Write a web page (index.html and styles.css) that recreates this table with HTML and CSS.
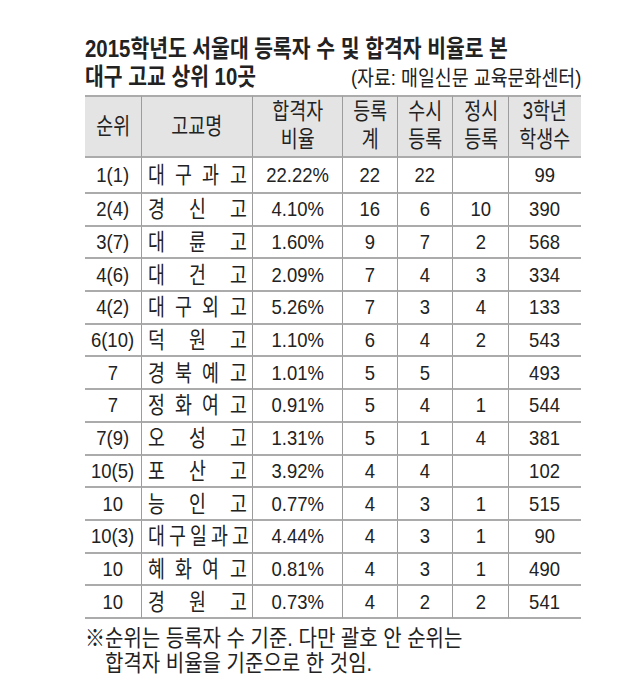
FILE: index.html
```html
<!DOCTYPE html>
<html lang="ko">
<head>
<meta charset="utf-8">
<title>2015학년도 서울대 등록자 수 및 합격자 비율로 본 대구 고교 상위 10곳</title>
<link rel="stylesheet" href="styles.css">
</head>
<body>
<div class="sheet">
  <div class="title-1"><span class="sx">2015학년도 서울대 등록자 수 및 합격자 비율로 본</span></div>
  <div class="title-2"><span class="sx">대구 고교 상위 10곳</span><span class="sx src">(자료: 매일신문 교육문화센터)</span></div>
  <table class="grid">
    <colgroup>
      <col class="c-rank"><col class="c-name"><col class="c-ratio"><col class="c-sum"><col class="c-early"><col class="c-reg"><col class="c-stu">
    </colgroup>
    <thead>
      <tr>
        <th><span class="v k">순위</span></th>
        <th><span class="v k">고교명</span></th>
        <th class="two"><span class="v k">합격자<br>비율</span></th>
        <th class="two"><span class="v k">등록<br>계</span></th>
        <th class="two"><span class="v k">수시<br>등록</span></th>
        <th class="two"><span class="v k">정시<br>등록</span></th>
        <th class="two"><span class="v k">3학년<br>학생수</span></th>
      </tr>
    </thead>
    <tbody>
      <tr class="first"><td><span class="v">1(1)</span></td><td class="name"><div class="nm"><span class="v k">대</span><span class="v k">구</span><span class="v k">과</span><span class="v k">고</span></div></td><td><span class="v">22.22%</span></td><td><span class="v">22</span></td><td><span class="v">22</span></td><td></td><td><span class="v">99</span></td></tr>
      <tr><td><span class="v">2(4)</span></td><td class="name"><div class="nm"><span class="v k">경</span><span class="v k">신</span><span class="v k">고</span></div></td><td><span class="v">4.10%</span></td><td><span class="v">16</span></td><td><span class="v">6</span></td><td><span class="v">10</span></td><td><span class="v">390</span></td></tr>
      <tr><td><span class="v">3(7)</span></td><td class="name"><div class="nm"><span class="v k">대</span><span class="v k">륜</span><span class="v k">고</span></div></td><td><span class="v">1.60%</span></td><td><span class="v">9</span></td><td><span class="v">7</span></td><td><span class="v">2</span></td><td><span class="v">568</span></td></tr>
      <tr><td><span class="v">4(6)</span></td><td class="name"><div class="nm"><span class="v k">대</span><span class="v k">건</span><span class="v k">고</span></div></td><td><span class="v">2.09%</span></td><td><span class="v">7</span></td><td><span class="v">4</span></td><td><span class="v">3</span></td><td><span class="v">334</span></td></tr>
      <tr><td><span class="v">4(2)</span></td><td class="name"><div class="nm"><span class="v k">대</span><span class="v k">구</span><span class="v k">외</span><span class="v k">고</span></div></td><td><span class="v">5.26%</span></td><td><span class="v">7</span></td><td><span class="v">3</span></td><td><span class="v">4</span></td><td><span class="v">133</span></td></tr>
      <tr><td><span class="v">6(10)</span></td><td class="name"><div class="nm"><span class="v k">덕</span><span class="v k">원</span><span class="v k">고</span></div></td><td><span class="v">1.10%</span></td><td><span class="v">6</span></td><td><span class="v">4</span></td><td><span class="v">2</span></td><td><span class="v">543</span></td></tr>
      <tr><td><span class="v">7</span></td><td class="name"><div class="nm"><span class="v k">경</span><span class="v k">북</span><span class="v k">예</span><span class="v k">고</span></div></td><td><span class="v">1.01%</span></td><td><span class="v">5</span></td><td><span class="v">5</span></td><td></td><td><span class="v">493</span></td></tr>
      <tr><td><span class="v">7</span></td><td class="name"><div class="nm"><span class="v k">정</span><span class="v k">화</span><span class="v k">여</span><span class="v k">고</span></div></td><td><span class="v">0.91%</span></td><td><span class="v">5</span></td><td><span class="v">4</span></td><td><span class="v">1</span></td><td><span class="v">544</span></td></tr>
      <tr><td><span class="v">7(9)</span></td><td class="name"><div class="nm"><span class="v k">오</span><span class="v k">성</span><span class="v k">고</span></div></td><td><span class="v">1.31%</span></td><td><span class="v">5</span></td><td><span class="v">1</span></td><td><span class="v">4</span></td><td><span class="v">381</span></td></tr>
      <tr><td><span class="v">10(5)</span></td><td class="name"><div class="nm"><span class="v k">포</span><span class="v k">산</span><span class="v k">고</span></div></td><td><span class="v">3.92%</span></td><td><span class="v">4</span></td><td><span class="v">4</span></td><td></td><td><span class="v">102</span></td></tr>
      <tr><td><span class="v">10</span></td><td class="name"><div class="nm"><span class="v k">능</span><span class="v k">인</span><span class="v k">고</span></div></td><td><span class="v">0.77%</span></td><td><span class="v">4</span></td><td><span class="v">3</span></td><td><span class="v">1</span></td><td><span class="v">515</span></td></tr>
      <tr><td><span class="v">10(3)</span></td><td class="name"><div class="nm"><span class="v k">대</span><span class="v k">구</span><span class="v k">일</span><span class="v k">과</span><span class="v k">고</span></div></td><td><span class="v">4.44%</span></td><td><span class="v">4</span></td><td><span class="v">3</span></td><td><span class="v">1</span></td><td><span class="v">90</span></td></tr>
      <tr><td><span class="v">10</span></td><td class="name"><div class="nm"><span class="v k">혜</span><span class="v k">화</span><span class="v k">여</span><span class="v k">고</span></div></td><td><span class="v">0.81%</span></td><td><span class="v">4</span></td><td><span class="v">3</span></td><td><span class="v">1</span></td><td><span class="v">490</span></td></tr>
      <tr><td><span class="v">10</span></td><td class="name"><div class="nm"><span class="v k">경</span><span class="v k">원</span><span class="v k">고</span></div></td><td><span class="v">0.73%</span></td><td><span class="v">4</span></td><td><span class="v">2</span></td><td><span class="v">2</span></td><td><span class="v">541</span></td></tr>
    </tbody>
  </table>
  <div class="note">
    <p><span class="sx">※순위는 등록자 수 기준. 다만 괄호 안 순위는</span></p>
    <p class="ind"><span class="sx">합격자 비율을 기준으로 한 것임.</span></p>
  </div>
</div>
</body>
</html>
```
FILE: styles.css
```css
* { box-sizing: border-box; }

body {
  margin: 0;
  background: #ffffff;
  color: #222222;
  font-family: "Liberation Sans", "Noto Sans CJK KR", sans-serif;
}

.sheet {
  margin-left: 85px;
  width: 496px;
  padding-top: 35px;
}

.sx {
  display: inline-block;
  transform: scaleX(0.85);
  transform-origin: left center;
  white-space: nowrap;
}

.title-1,
.title-2 {
  height: 28px;
  line-height: 28px;
  font-size: 24px;
  font-weight: 700;
  white-space: nowrap;
}

.title-2 {
  display: flex;
  justify-content: space-between;
  align-items: baseline;
}

.title-2 .src {
  font-size: 21px;
  font-weight: 400;
  transform: scaleX(0.875);
  transform-origin: right center;
}

.grid {
  width: 496px;
  margin-top: 4px;
  border-collapse: separate;
  border-spacing: 0;
  table-layout: fixed;
}

.c-rank { width: 55.7px; }
.c-name { width: 111.3px; }
.c-ratio { width: 89.7px; }
.c-sum { width: 55px; }
.c-early { width: 55.8px; }
.c-reg { width: 55.5px; }
.c-stu { width: 73px; }

.grid th,
.grid td {
  padding: 0;
  text-align: center;
  vertical-align: middle;
  font-size: 21px;
  font-weight: 400;
  line-height: 28px;
  white-space: nowrap;
  border-bottom: 2px solid #ababab;
}

.grid th + th,
.grid td + td {
  border-left: 1px solid #9c9c9c;
}

.grid thead th {
  height: 62px;
  background: #e4e4e4;
  border-top: 2px solid #ababab;
}

.grid thead th.two {
  padding-bottom: 2px;
}

.grid tbody td {
  height: 32.7px;
}

.grid tbody tr.first td {
  height: 36px;
}

.v {
  display: inline-block;
  transform: scaleX(0.88);
}

.v.k {
  font-size: 23px;
  transform: scaleX(0.8);
}

.nm {
  display: flex;
  justify-content: space-between;
  padding: 0 3px 0 4px;
}

.note {
  margin-top: 7px;
  font-size: 23px;
  line-height: 25px;
}

.note p {
  margin: 0;
  white-space: nowrap;
}

.note .sx {
  transform: scaleX(0.87);
}

.note .ind {
  padding-left: 19.5px;
}
```
